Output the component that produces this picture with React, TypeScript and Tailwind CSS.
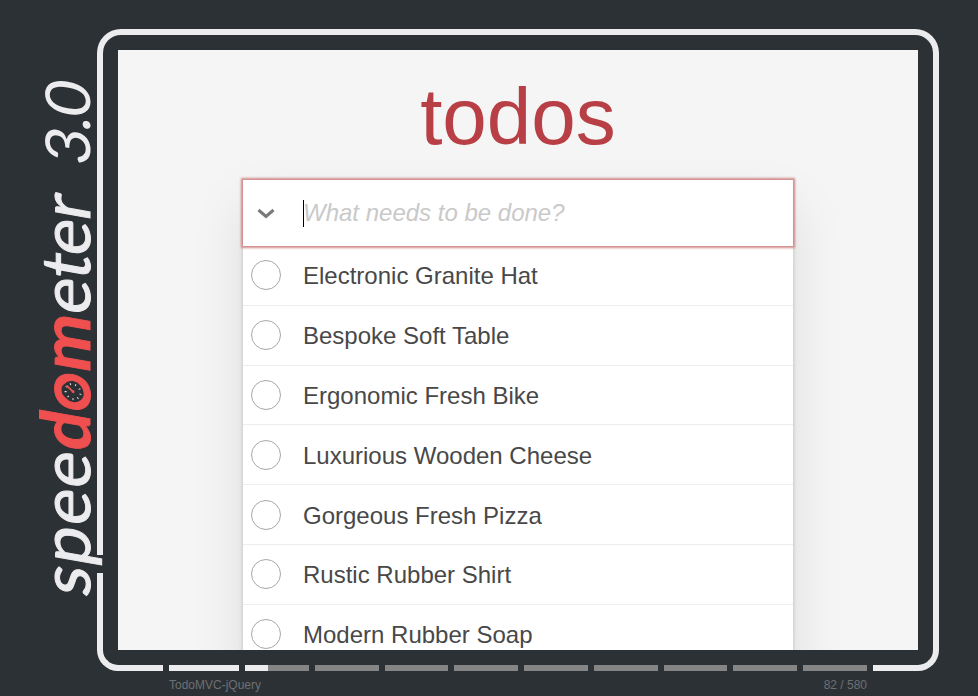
const TODOS = [
  'Electronic Granite Hat',
  'Bespoke Soft Table',
  'Ergonomic Fresh Bike',
  'Luxurious Wooden Cheese',
  'Gorgeous Fresh Pizza',
  'Rustic Rubber Shirt',
  'Modern Rubber Soap',
];

const PENDING_SEGMENTS = [23, 0, 0, 0, 0, 0, 0, 0, 0];

function Gauge() {
  const ticks = [0, 40, 80, 120, 160, 200, 240, 280, 320];
  return (
    <svg width="22" height="22" viewBox="0 0 22 22">
      <circle cx="11" cy="11" r="10.5" fill="#2c3136" />
      {ticks.map((angle) => (
        <rect key={angle} x="10.5" y="2.5" width="1" height="2" fill="#e8e8e8" transform={`rotate(${angle} 11 11)`} />
      ))}
      <path d="M11 11 L17.5 16" stroke="#ef4f4f" strokeWidth="2" />
      <circle cx="11" cy="11" r="1.5" fill="#ef4f4f" />
    </svg>
  );
}

function Logo() {
  return (
    <div className="relative z-10 flex h-full w-[97px] shrink-0 flex-col items-start gap-[31px] pl-[30px] pt-[81px] font-['Lato',sans-serif] leading-none text-[#ececee]">
      <div className="ml-[5px] whitespace-nowrap text-[62px] tracking-[-1.5px] [transform:rotate(180deg)_skewY(10deg)] [writing-mode:vertical-rl]">
        3.0
      </div>
      <div className="whitespace-nowrap text-[68px] tracking-[0.5px] [-webkit-text-stroke:1px_#ececee] [transform:rotate(180deg)_skewY(10deg)] [writing-mode:vertical-rl]">
        <span className="tracking-[1.5px]">spee</span>
        <span className="font-bold text-[#ef4f4f] [-webkit-text-stroke:1px_#ef4f4f]">
          d
          <span className="relative">
            o
            <span className="absolute left-[20px] top-[9px]">
              <Gauge />
            </span>
          </span>
          m
        </span>
        <span className="tracking-[-0.5px]">eter</span>
      </div>
    </div>
  );
}

function TodoRow({ title }: { title: string }) {
  return (
    <li className="flex h-[59.8px] shrink-0 items-center border-b border-[#ededed] bg-white">
      <span className="ml-[8px] h-[30px] w-[30px] shrink-0 rounded-full border border-[#a8a8a8]" />
      <span className="ml-[22px] pt-[2px] text-2xl text-[#484848]">{title}</span>
    </li>
  );
}

function ProgressEdge() {
  return (
    <div className="flex h-[21px] items-end">
      <div className="h-[21px] w-[66px] rounded-bl-[24px] border-b-[6px] border-l-[6px] border-[#ececee]" />
      <div className="flex h-[6px] flex-1 gap-[6px] px-[6px]">
        <div className="w-[70px] bg-[#ececee]" />
        {PENDING_SEGMENTS.map((fill, index) => (
          <div key={index} className="flex-1 bg-[#858585]">
            {fill > 0 ? <div className="h-full bg-[#ececee]" style={{ width: fill }} /> : null}
          </div>
        ))}
      </div>
      <div className="h-[21px] w-[66px] rounded-br-[24px] border-b-[6px] border-r-[6px] border-[#ececee]" />
    </div>
  );
}

export default function App() {
  return (
    <div className="relative flex h-[696px] w-[978px] overflow-hidden bg-[#2c3136] font-['Liberation_Sans',Arial,sans-serif]">
      <Logo />
      <div className="flex w-[842px] flex-col pt-[29px]">
        <div className="relative rounded-t-[24px] border-x-[6px] border-t-[6px] border-[#ececee] px-[15px] pt-[15px]">
          <div className="h-[600px] overflow-hidden bg-[#f5f5f5]">
            <h1 className="mt-[19px] text-center text-[80px] font-extralight leading-[96px] text-[#b83f45]">todos</h1>
            <div className="mx-auto mt-[15px] w-[550px] shadow-[0_2px_4px_rgba(0,0,0,0.2),0_25px_50px_rgba(0,0,0,0.1)]">
              <div className="relative z-10 flex h-[66px] items-center bg-white shadow-[0_0_2px_2px_#d48c8c]">
                <svg className="ml-[14px]" width="18" height="11" viewBox="0 0 18 11">
                  <path d="M1.5 2 L9 8.5 L16.5 2" fill="none" stroke="#7a7a7a" strokeWidth="3" />
                </svg>
                <span className="ml-[28px] h-[27px] w-px bg-black" />
                <span className="-ml-px text-2xl italic text-[#c9c9c9]">What needs to be done?</span>
              </div>
              <ul className="flex flex-col">
                {TODOS.map((title) => (
                  <TodoRow key={title} title={title} />
                ))}
              </ul>
            </div>
          </div>
          <div className="absolute -left-[6px] top-[520px] h-[18px] w-[6px] bg-[#2c3136]" />
        </div>
        <ProgressEdge />
        <div className="mt-[7px] flex justify-between px-[72px] text-xs leading-[14px] text-[#6e7072]">
          <span>TodoMVC-jQuery</span>
          <span>82 / 580</span>
        </div>
      </div>
    </div>
  );
}
